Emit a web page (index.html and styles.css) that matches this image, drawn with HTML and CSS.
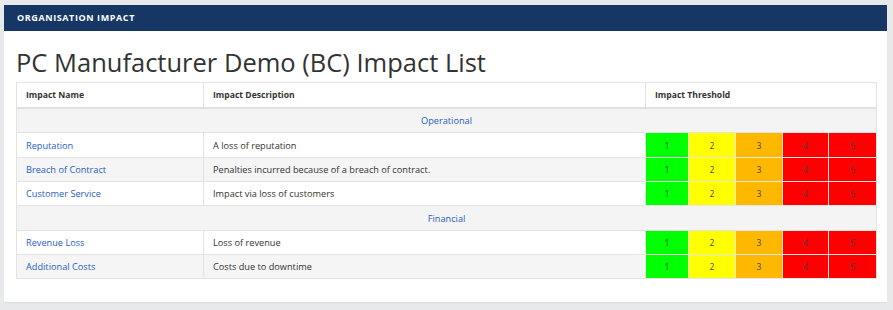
FILE: index.html
```html
<!DOCTYPE html>
<html>
<head>
<meta charset="utf-8">
<link rel="stylesheet" href="styles.css">
</head>
<body>
<div class="card">
  <div class="card-head">ORGANISATION IMPACT</div>
  <div class="card-body">
    <h1 class="title">PC Manufacturer Demo (BC) Impact List</h1>
    <table class="impact">
      <colgroup>
        <col class="c-name"><col class="c-desc"><col class="c-t1"><col class="c-t2"><col class="c-t3"><col class="c-t4"><col class="c-t5">
      </colgroup>
      <thead>
        <tr><th>Impact Name</th><th>Impact Description</th><th colspan="5">Impact Threshold</th></tr>
      </thead>
      <tbody>
        <tr class="group"><td colspan="7"><a>Operational</a></td></tr>
        <tr><td><a>Reputation</a></td><td>A loss of reputation</td><td class="t g">1</td><td class="t y">2</td><td class="t o">3</td><td class="t r">4</td><td class="t r">5</td></tr>
        <tr class="alt"><td><a>Breach of Contract</a></td><td>Penalties incurred because of a breach of contract.</td><td class="t g">1</td><td class="t y">2</td><td class="t o">3</td><td class="t r">4</td><td class="t r">5</td></tr>
        <tr><td><a>Customer Service</a></td><td>Impact via loss of customers</td><td class="t g">1</td><td class="t y">2</td><td class="t o">3</td><td class="t r">4</td><td class="t r">5</td></tr>
        <tr class="group"><td colspan="7"><a>Financial</a></td></tr>
        <tr><td><a>Revenue Loss</a></td><td>Loss of revenue</td><td class="t g">1</td><td class="t y">2</td><td class="t o">3</td><td class="t r">4</td><td class="t r">5</td></tr>
        <tr class="alt"><td><a>Additional Costs</a></td><td>Costs due to downtime</td><td class="t g">1</td><td class="t y">2</td><td class="t o">3</td><td class="t r">4</td><td class="t r">5</td></tr>
      </tbody>
    </table>
  </div>
</div>
</body>
</html>
```
FILE: styles.css
```css
html, body { margin: 0; padding: 0; }
body {
  background: #e8e9eb;
  font-family: "Open Sans", "DejaVu Sans", sans-serif;
  color: #333;
  padding: 5px 6px 8px 4px;
}
.card {
  background: #fff;
  height: 298px;
  box-sizing: border-box;
  border-bottom: 1px solid #dcdcdc;
}
.card-head {
  background: #163765;
  color: #fff;
  height: 26px;
  line-height: 26px;
  font-size: 9px;
  font-weight: 700;
  letter-spacing: 0.6px;
  padding-left: 13px;
}
.card-body { padding: 0 11px 0 12px; }
.title {
  margin: 0;
  padding-top: 17px;
  height: 51px;
  box-sizing: border-box;
  font-size: 25.5px;
  font-weight: 400;
  line-height: 28px;
  color: #333;
}
.impact {
  width: 100%;
  border-collapse: collapse;
  font-size: 9.2px;
  table-layout: fixed;
}
.c-name { width: 187px; }
.c-desc { width: 442px; }
.c-t1 { width: 43px; }
.c-t2 { width: 47px; }
.c-t3 { width: 47px; }
.c-t4 { width: 46px; }
.c-t5 { width: 48px; }
.impact th, .impact td {
  border: 1px solid #e3e3e3;
  height: 23px;
  padding: 0 9px;
  text-align: left;
}
.impact th {
  font-weight: 700;
  font-size: 8.6px;
  height: 24px;
  border-bottom: 2px solid #e0e0e0;
  color: #333;
}
.impact tbody tr:nth-child(3n+2) td { height: 24px; }
.impact a { color: #2760c4; }
.impact tr.group td {
  background: #f4f4f4;
  text-align: center;
}
.impact tr.alt td { background: #f5f5f5; }
.impact td.t {
  text-align: center;
  padding: 0;
  color: #444;
  font-size: 8.5px;
  border-color: #e6e6e6;
}
.impact tr td.g { background: #00ff00; }
.impact tr td.y { background: #ffff00; }
.impact tr td.o { background: #ffb800; }
.impact tr td.r { background: #ff0000; }
```
